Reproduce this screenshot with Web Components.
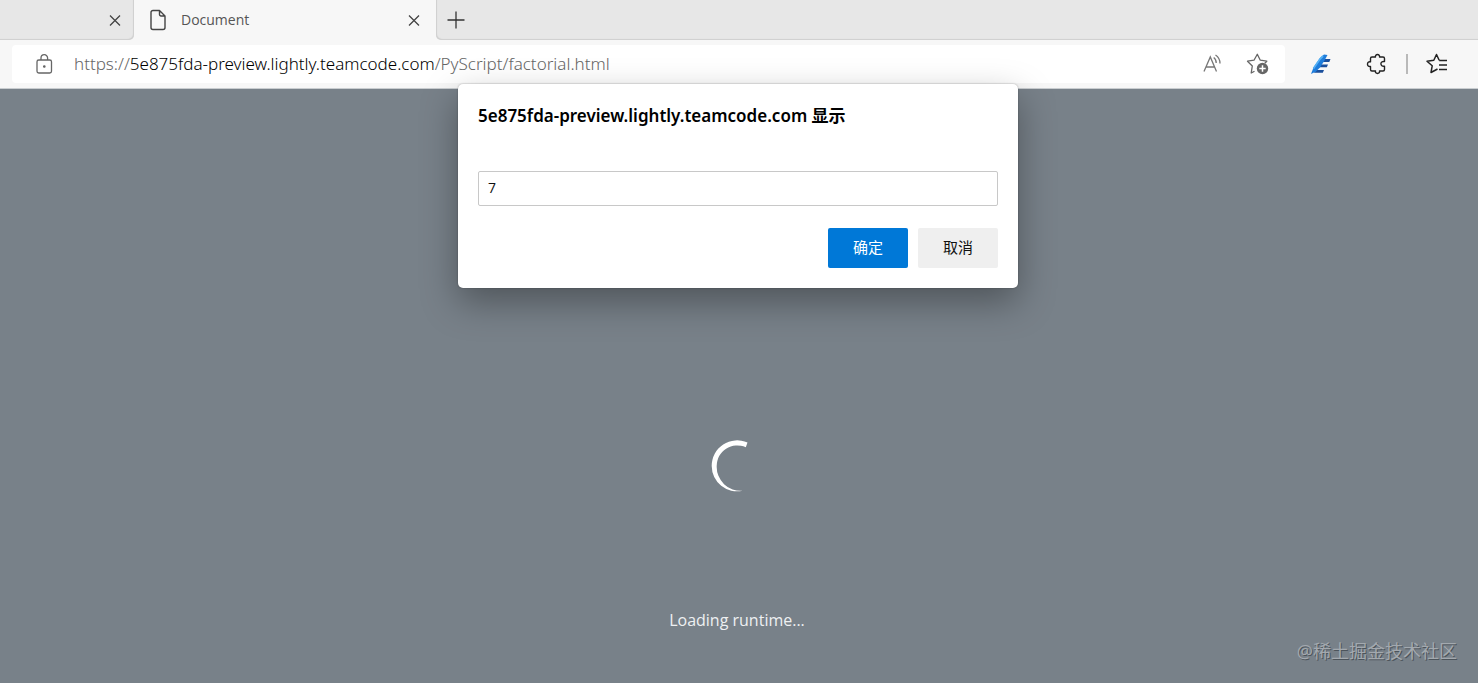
<!DOCTYPE html>
<html lang="zh-CN">
<head>
<meta charset="utf-8">
<meta name="viewport" content="width=device-width, initial-scale=1">
<title>Document</title>
<style>
  html, body { margin: 0; }
  body {
    font-family: "Open Sans", "Noto Sans CJK SC", sans-serif;
    background: #788189;
  }
</style>
</head>
<body>
<browser-window>
  <tab-strip slot="tabs">
    <browser-tab></browser-tab>
    <browser-tab active>Document</browser-tab>
  </tab-strip>
  <address-bar slot="toolbar"></address-bar>
  <prompt-dialog slot="dialog" value="7">5e875fda-preview.lightly.teamcode.com 显示</prompt-dialog>
  <loading-page>Loading runtime...</loading-page>
  <water-mark slot="mark">@稀土掘金技术社区</water-mark>
</browser-window>

<script>
const define = (name, html, setup) => {
  const template = document.createElement('template');
  template.innerHTML = html;
  customElements.define(name, class extends HTMLElement {
    constructor() {
      super();
      this.attachShadow({ mode: 'open' }).append(template.content.cloneNode(true));
      if (setup) setup(this, this.shadowRoot);
    }
  });
};

define('browser-window', `
  <style>
    :host { display: flex; flex-direction: column; min-height: 100vh; position: relative; overflow: hidden; background: #788189; }
    main { flex: 1; display: flex; flex-direction: column; }
    .dialog { position: absolute; top: 84px; left: 0; right: 2px; display: flex; justify-content: center; }
    .mark { position: absolute; right: 21px; bottom: 20px; }
  </style>
  <slot name="tabs"></slot>
  <slot name="toolbar"></slot>
  <main><slot></slot></main>
  <div class="dialog"><slot name="dialog"></slot></div>
  <div class="mark"><slot name="mark"></slot></div>
`);

define('tab-strip', `
  <style>
    :host { display: flex; height: 40px; background: #f7f7f7; }
    .rest { flex: 1; display: flex; align-items: center; padding-left: 10px; background: #e7e7e7; border-radius: 0 0 0 5px; box-shadow: inset 1px -1px 1px #cfcfcf; }
    button { display: flex; padding: 0; border: 0; background: none; color: #333; }
  </style>
  <slot></slot>
  <div class="rest">
    <button aria-label="New tab"><svg width="20" height="20" viewBox="0 0 20 20" fill="none" stroke="currentColor" stroke-width="1.3"><path d="M10 1.500v17M1.500 10h17"/></svg></button>
  </div>
`);

define('browser-tab', `
  <style>
    :host { box-sizing: border-box; display: flex; align-items: center; width: 134px; padding: 0 11px 0 15px; background: #e7e7e7; border-radius: 0 0 5px 0; box-shadow: inset -1px -1px 1px #cfcfcf; }
    :host([active]) { width: 302px; padding-right: 14px; background: #f7f7f7; border-radius: 5px 5px 0 0; box-shadow: none; }
    .page { display: none; margin-right: 14px; }
    :host([active]) .page { display: block; }
    .title { flex: 1; font-size: 14px; line-height: 20px; color: #555; }
    button { display: flex; padding: 0; border: 0; background: none; color: #444; }
  </style>
  <svg class="page" width="18" height="22" viewBox="0 0 18 22" fill="none" stroke="#444" stroke-width="1.4" stroke-linejoin="round"><path d="M4 1.500h6.500L16 7v11.500a2 2 0 0 1-2 2H4a2 2 0 0 1-2-2v-15a2 2 0 0 1 2-2zM10.500 1.500V5.500a1.500 1.500 0 0 0 1.500 1.500h4"/></svg>
  <span class="title"><slot></slot></span>
  <button aria-label="Close tab"><svg width="16" height="16" viewBox="0 0 16 16" fill="none" stroke="currentColor" stroke-width="1.3"><path d="M3 3.500l10 10M13 3.500l-10 10"/></svg></button>
`);

define('address-bar', `
  <style>
    :host { display: flex; align-items: center; box-sizing: border-box; height: 49px; padding: 0 29px 0 12px; border-bottom: 1px solid #c9cdd0; background: #f7f7f7; }
    .field { flex: 1; display: flex; align-items: center; height: 38px; padding: 0 15px 0 22px; border-radius: 4px; background: #fff; }
    .url { flex: 1; margin-left: 20px; font-family: "Noto Sans", sans-serif; font-weight: 300; font-size: 17px; line-height: 24px; color: #666; white-space: nowrap; overflow: hidden; outline: 0; }
    .url b { font-weight: 300; color: #000; }
    button { display: flex; padding: 0; border: 0; background: none; }
    .field button + button { margin-left: 22px; }
    .tools { display: flex; align-items: center; }
    .tools button:first-child { margin: 0 32px 0 24px; }
    .bar { width: 2px; height: 20px; margin: 0 17px; background: #b9b9b9; }
  </style>
  <div class="field">
    <button aria-label="Site information"><svg width="20" height="22" viewBox="0 0 20 22" fill="none" stroke="#666" stroke-width="1.3"><rect x="3" y="7" width="14.500" height="13" rx="1.800"/><path d="M7 7V5a3.300 3.300 0 0 1 6.600 0v2"/><circle cx="10.300" cy="13.500" r=".7" fill="#666"/></svg></button>
    <span class="url" role="textbox" contenteditable="true" spellcheck="false" aria-label="Address">https://<b>5e875fda-preview.lightly.teamcode.com</b>/PyScript/factorial.html</span>
    <button aria-label="Read aloud"><svg width="24" height="22" viewBox="0 0 24 22" fill="none" stroke="#777" stroke-width="1.300"><path d="M4 18.500L10.300 4l6.200 14.500M6.200 14h8.200M13.700 4.500a6.500 6.500 0 0 1 2.500 5.500M15.500 2a10 10 0 0 1 4.500 8.500"/></svg></button>
    <button aria-label="Add to favorites"><svg width="24" height="24" viewBox="0 0 24 24" fill="none" stroke="#666" stroke-width="1.300" stroke-linejoin="round"><path d="M8.500 19.200L5.200 21l1.100-7L1.500 9.200l6.500-1L11.300 2.300l3 5.900 6.500 1-2 2"/><circle cx="16.500" cy="16.500" r="5.700" fill="#666" stroke="none"/><path d="M16.500 13.300v6.400M13.300 16.500h6.400" stroke="#fff" stroke-width="1.500"/></svg></button>
  </div>
  <div class="tools">
    <button aria-label="Extension"><svg width="24" height="24" viewBox="0 0 24 24"><path d="M13 7h8.500l-1.200 3H11zM9.500 12.500h9.500l-1.200 2.800H8zM6.500 18h8.500l-1.200 2.800H5z" fill="#1b4f9c"/><path d="M2 22L4.500 15.500 11 6l4-3.500 3.500.5-3 5.500-4.500 7-4 4z" fill="#1f7ddb"/><path d="M4.500 16.500L11 7l3-3" fill="none" stroke="#53b0f5" stroke-width="1.800"/></svg></button>
    <button aria-label="Extensions"><svg width="24" height="24" viewBox="0 0 24 24" fill="none" stroke="#222" stroke-width="1.400" stroke-linejoin="round"><path d="M7 5h3.500C9.500 1.700 15.500 1.700 14.500 5H18q1.500 0 1.500 1.500V9.500c-4.800-.8-4.800 5.500 0 4.700V17.500q0 1.500-1.500 1.500h-3.500c1 3.300-5 3.300-4 0H7Q5.500 19 5.500 17.500v-3c-4 .8-4-5.500 0-4.700V6.500Q5.500 5 7 5z"/></svg></button>
    <span class="bar"></span>
    <button aria-label="Favorites"><svg width="24" height="24" viewBox="0 0 24 24" fill="none" stroke="#222" stroke-width="1.500" stroke-linejoin="round"><path d="M12.500 17L6 20.500l1.200-6.700L2 9.200l6.800-1L11.500 2.500l2.700 5.700M14.200 8.500H22M14 13h8M14 17.500h8"/></svg></button>
  </div>
`);

define('prompt-dialog', `
  <style>
    :host { display: block; box-sizing: border-box; width: 560px; max-width: 100vw; padding: 20px; border-radius: 5px; background: #fff; box-shadow: 0 0 2px rgba(0,0,0,.3), 0 14px 36px rgba(0,0,0,.34); color: #000; }
    form { display: flex; flex-direction: column; margin: 0; }
    label { font-family: "Noto Sans", "Noto Sans CJK SC", sans-serif; font-size: 17px; line-height: 24px; font-weight: 600; }
    input { box-sizing: border-box; width: 100%; height: 35px; margin: 43px 0 22px; padding: 0 9px 2px; border: 1px solid #c8c8c8; border-radius: 2px; outline: 0; background: #fff; font: 14px/20px "Open Sans", sans-serif; color: #111; }
    .actions { display: flex; justify-content: flex-end; gap: 10px; }
    button { width: 80px; height: 40px; padding: 0 0 2px; border: 0; border-radius: 2px; background: #efefef; color: #111; font: 15px/20px "Noto Sans CJK SC", sans-serif; }
    .ok { background: #0078d7; color: #fff; }
  </style>
  <form>
    <label for="answer"><slot></slot></label>
    <input id="answer" type="text">
    <div class="actions"><button class="ok" type="button">确定</button><button type="button">取消</button></div>
  </form>
`, (host, root) => { root.querySelector('input').value = host.getAttribute('value') || ''; });

define('loading-page', `
  <style>
    :host { flex: 1; display: flex; flex-direction: column; align-items: center; justify-content: flex-end; gap: 116px; padding: 0 4px 51px 0; color: #eef0f2; }
    p { margin: 0; font-size: 16px; line-height: 24px; }
  </style>
  <svg width="52" height="52" viewBox="0 0 52 52" aria-hidden="true"><path d="M36.500 2.500A25.500 25.500 0 0 0 .7 26A25.500 25.500 0 0 0 31.500 50.800A24 24 0 0 1 5.700 26A20.500 20.500 0 0 1 34.800 7.300Z" fill="#fff"/></svg>
  <p role="status"><slot></slot></p>
`);

define('water-mark', `
  <style>
    :host { display: block; font-size: 18px; line-height: 24px; color: #a3a9af; text-shadow: 1px 1px 0 #4c545b; white-space: nowrap; }
  </style>
  <slot></slot>
`);
</script>
</body>
</html>
